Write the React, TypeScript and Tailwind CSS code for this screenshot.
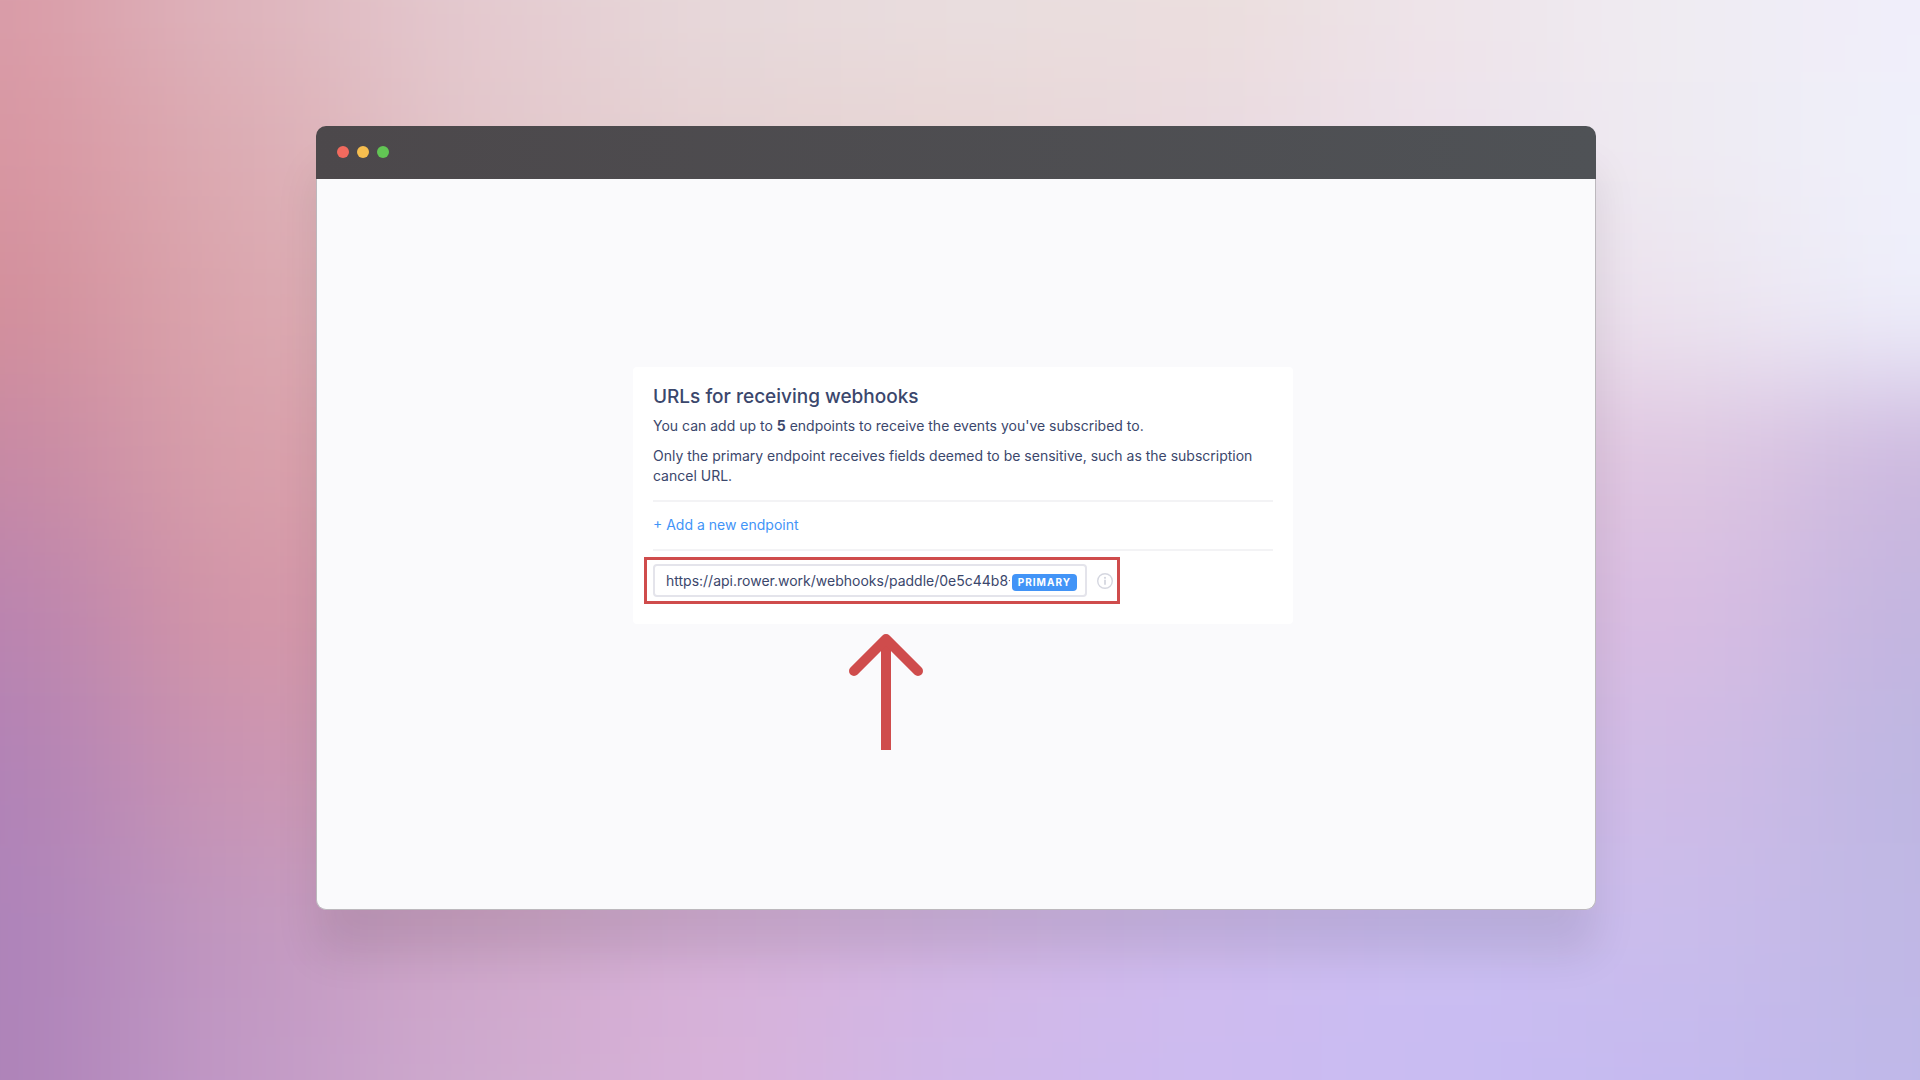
import { useState } from 'react';

// backdrop colours, row by row; painted as large cells and blurred together
const BACKDROP = [
  ['#d99ba7', '#deb5bd', '#e4cad0', '#e7d9db', '#e9dedf', '#ebdedd', '#eee4ea', '#efecf2', '#f0eefb'],
  ['#d895a1', '#dcacb3', '#e3c7cb', '#e5d2d3', '#e8d5d4', '#ead9df', '#ede2eb', '#eeebf2', '#eff0fb'],
  ['#d28e9b', '#dba6ae', '#dfb8bf', '#e1c4cb', '#e5ccd2', '#e8d3e0', '#e9d6e4', '#ece4ef', '#eeeffb'],
  ['#c688a4', '#d9a0aa', '#d9a3b2', '#dcb3c4', '#dfbcd3', '#e0c1dc', '#dfbedb', '#dfc8e2', '#cbb7de'],
  ['#b983b0', '#d496a6', '#d49cb4', '#d7a9c8', '#d8b1d4', '#d8b8de', '#d8bbe0', '#d9bde2', '#c2b5e0'],
  ['#b082b6', '#cb95b2', '#cf9fb8', '#d6aed0', '#d6b2da', '#d2b8e4', '#d0bae8', '#d0bce6', '#bdb6e2'],
  ['#ad82b9', '#c298bf', '#cfa6c8', '#d6b1d8', '#d3b6e3', '#cfbbee', '#cabdf2', '#cabceb', '#bfb7e4'],
  ['#ad82b8', '#c299c6', '#cfabcf', '#d8b2da', '#d0b8ea', '#cdbbf0', '#c9bcf3', '#c5baef', '#bfb8e8'],
];

const STEP_X = 240;
const STEP_Y = 154;

function Backdrop() {
  const lastRow = BACKDROP.length - 1;
  return (
    <svg
      className="absolute inset-0 h-full w-full"
      viewBox="0 0 1920 1080"
      preserveAspectRatio="none"
      aria-hidden="true"
    >
      <defs>
        <filter
          id="soften"
          filterUnits="userSpaceOnUse"
          x="-400"
          y="-400"
          width="2720"
          height="1880"
          colorInterpolationFilters="sRGB"
        >
          <feGaussianBlur stdDeviation="85 58" />
        </filter>
      </defs>
      <g filter="url(#soften)">
        {BACKDROP.map((row, y) =>
          row.map((color, x) => {
            // edge cells run on past the canvas so the blur has no dark rim
            const left = x === 0 ? -600 : (x - 0.5) * STEP_X;
            const right = x === row.length - 1 ? 2600 : (x + 0.5) * STEP_X + 1;
            const top = y === 0 ? -600 : (y - 0.5) * STEP_Y;
            const bottom = y === lastRow ? 1800 : (y + 0.5) * STEP_Y + 1;
            return <rect key={`${x}-${y}`} x={left} y={top} width={right - left} height={bottom - top} fill={color} />;
          }),
        )}
      </g>
    </svg>
  );
}

function InfoIcon() {
  return (
    <svg className="h-4 w-4" viewBox="0 0 16 16" fill="none" stroke="currentColor">
      <circle cx="8" cy="8" r="7.3" strokeWidth="1.4" />
      <circle cx="8" cy="4.8" r="1.1" fill="currentColor" stroke="none" />
      <path d="M8 6.8v5" strokeWidth="1.8" />
    </svg>
  );
}

function EndpointRow() {
  const [url, setUrl] = useState('https://api.rower.work/webhooks/paddle/0e5c44b8-');

  return (
    <div className="mt-[6px] -ml-[9px] flex w-fit items-center gap-[10px] border-3 border-[#cf4c4c] py-1 pr-1 pl-[6px]">
      <div className="flex h-[33px] w-[434px] items-center rounded-sm border-2 border-[#e4e4eb] bg-white pr-2 pl-[11px]">
        <input
          type="text"
          aria-label="Endpoint URL"
          value={url}
          onChange={(e) => setUrl(e.target.value)}
          className="min-w-0 flex-1 bg-transparent text-sm outline-none"
        />
        <span className="mt-1 ml-[2px] rounded-sm bg-[#4294f7] px-[6px] text-[10px] leading-[17px] font-bold tracking-widest text-white">
          PRIMARY
        </span>
      </div>
      <button type="button" aria-label="Endpoint info" className="text-[#d5d7e0]">
        <InfoIcon />
      </button>
    </div>
  );
}

export default function App() {
  return (
    <main className="relative flex min-h-screen justify-center overflow-hidden pt-[126px] pb-[170px] font-[Inter,'Liberation_Sans',sans-serif] text-[#3b476c]">
      <Backdrop />
      <div className="relative mr-2 flex w-2/3 flex-col rounded-[10px] shadow-[0_44px_44px_rgba(0,0,0,0.09)]">
        <header className="flex h-[53px] items-center gap-2 rounded-t-[10px] bg-linear-to-r from-[#4c484b] to-[#4f5256] px-[21px] pb-px">
          <span className="h-3 w-3 rounded-full bg-[#f16a5e]" />
          <span className="h-3 w-3 rounded-full bg-[#f6be4f]" />
          <span className="h-3 w-3 rounded-full bg-[#62c554]" />
        </header>

        <div className="flex flex-1 flex-col items-center rounded-b-[10px] border border-t-0 border-[#bcb8bd] bg-[#fafafc] pt-[188px] pl-[14px]">
          <section className="w-[660px] rounded-sm bg-white px-5 pt-[18px] pb-5">
            <h1 className="text-[19px] leading-6 font-medium">URLs for receiving webhooks</h1>
            <p className="mt-[7px] text-sm leading-5">
              You can add up to <strong>5</strong> endpoints to receive the events you've subscribed to.
            </p>
            <p className="mt-[10px] text-sm leading-5">
              Only the primary endpoint receives fields deemed to be sensitive, such as the subscription cancel URL.
            </p>
            <div className="mt-[14px] border-y-2 border-[#f3f3f5] pt-[13px] pb-[14px]">
              <button type="button" className="block text-sm leading-5 text-[#4294f7]">
                + Add a new endpoint
              </button>
            </div>
            <EndpointRow />
          </section>

          <svg
            className="mt-[10px] mr-[154px] h-[116px] w-[74px]"
            viewBox="0 0 74 116"
            fill="none"
            stroke="#cf4c4c"
            strokeWidth="10"
            aria-hidden="true"
          >
            <path d="M37 116V8" />
            <path d="M5 37L37 5l32 32" strokeLinecap="round" strokeLinejoin="round" />
          </svg>
        </div>
      </div>
    </main>
  );
}
